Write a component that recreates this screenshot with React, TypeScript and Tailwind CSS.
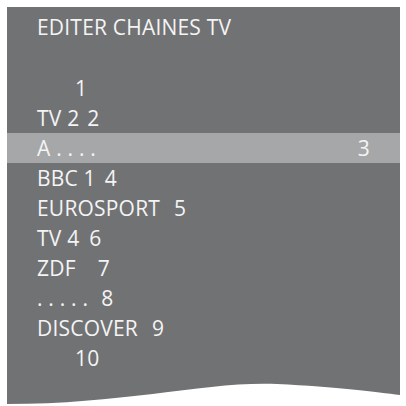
const rows = [
  { name: "", num: "1", gap: "ml-[38px]" },
  { name: "TV 2", num: "2", gap: "ml-[8px]" },
  { name: "A . . . .", num: "3", gap: "", active: true },
  { name: "BBC 1", num: "4", gap: "ml-[9px]" },
  { name: "EUROSPORT", num: "5", gap: "ml-[14px]" },
  { name: "TV 4", num: "6", gap: "ml-[10px]" },
  { name: "ZDF", num: "7", gap: "ml-[22px]" },
  { name: ". . . . .", num: "8", gap: "ml-[13px]" },
  { name: "DISCOVER", num: "9", gap: "ml-[14px]" },
  { name: "", num: "10", gap: "ml-[38px]" },
];

export default function App() {
  return (
    <div className="w-[406px] h-[406px] bg-white pt-[7px] pl-[7px] pr-[6px] overflow-hidden">
      <div
        className="relative h-[399px] bg-[#717274] text-[#f4f4f4] text-[21px] leading-[30px] font-medium tracking-[0.2px]"
        style={{ fontFamily: '"Open Sans", "Noto Sans", sans-serif' }}
      >
        <div className="pt-[5px] pl-[30px]">EDITER CHAINES TV</div>

        <div className="mt-[31px]">
          {rows.map((r) =>
            r.active ? (
              <div
                key={r.num}
                className="flex justify-between bg-[#a6a7a9] pl-[30px] pr-[30px] h-[30px] items-center"
              >
                <span className="whitespace-pre">{r.name}</span>
                <span>{r.num}</span>
              </div>
            ) : (
              <div key={r.num} className="flex pl-[30px] h-[30px] items-center">
                {r.name && <span className="whitespace-pre">{r.name}</span>}
                <span className={r.gap}>{r.num}</span>
              </div>
            )
          )}
        </div>

        {/* wavy bottom edge */}
        <svg
          className="absolute left-0 bottom-0"
          width="393"
          height="26"
          viewBox="0 0 393 26"
          preserveAspectRatio="none"
        >
          <path
            d="M0 24 C120 24 200 1 270 4 C330 7 370 12 393 15 L393 26 L0 26 Z"
            fill="#ffffff"
          />
        </svg>
      </div>
    </div>
  );
}
